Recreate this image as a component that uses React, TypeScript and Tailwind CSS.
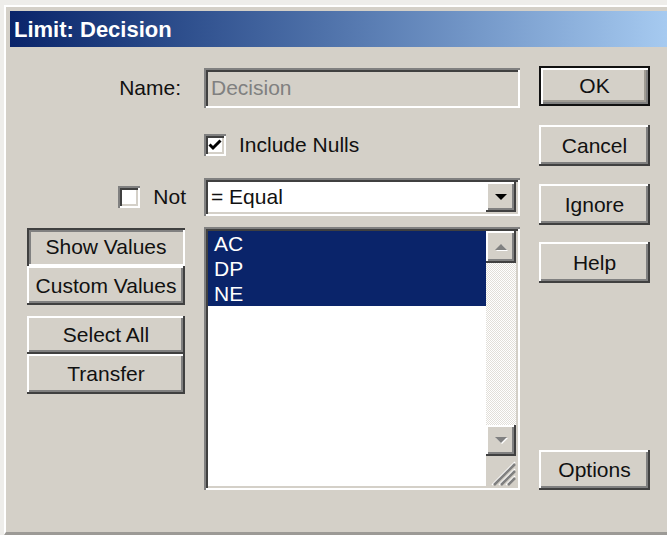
const raised =
  "shadow-[inset_-2px_-2px_0_#404040,inset_2px_2px_0_#ffffff,inset_-4px_-4px_0_#808080]";
const pressed =
  "shadow-[inset_2px_2px_0_#404040,inset_-2px_-2px_0_#ffffff,inset_4px_4px_0_#808080]";
const defaultBtn =
  "shadow-[inset_0_0_0_2px_#111111,inset_4px_4px_0_#ffffff,inset_-4px_-4px_0_#808080,inset_-6px_-6px_0_#a09c94]";
const sunken =
  "shadow-[inset_2px_2px_0_#808080,inset_-2px_-2px_0_#ffffff,inset_4px_4px_0_#404040,inset_-4px_-4px_0_#d4d0c8]";

function Button({
  label,
  className = "",
  look = raised,
}: {
  label: string;
  className?: string;
  look?: string;
}) {
  return (
    <div
      className={`flex items-center justify-center bg-[#d4d0c8] text-[21px] text-[#111] ${look} ${className}`}
    >
      {label}
    </div>
  );
}

function CheckBox({ checked }: { checked?: boolean }) {
  return (
    <div className={`flex h-[22px] w-[22px] items-center justify-center bg-white ${sunken}`}>
      {checked && (
        <svg width="14" height="12" viewBox="0 0 14 12">
          <path d="M1.5 5.5 L5 9 L12.5 1.5" fill="none" stroke="#000" strokeWidth="3" />
        </svg>
      )}
    </div>
  );
}

function Arrow({ up, dim }: { up?: boolean; dim?: boolean }) {
  const pts = up ? "1,7 7,1 13,7" : "1,1 13,1 7,7";
  return (
    <svg width="15" height="9" viewBox="0 0 15 9">
      {dim && <polygon points={pts} fill="#fff" transform="translate(1 1)" />}
      <polygon points={pts} fill={dim ? "#808080" : "#000"} />
    </svg>
  );
}

function SizeGrip() {
  return (
    <svg width="30" height="30" viewBox="0 0 30 30">
      {[0, 7, 14].map((o) => (
        <g key={o}>
          <line x1={29} y1={6 + o} x2={6 + o} y2={29} stroke="#ffffff" strokeWidth="1.5" />
          <line x1={29} y1={8 + o} x2={8 + o} y2={29} stroke="#808080" strokeWidth="2.5" />
        </g>
      ))}
    </svg>
  );
}

export default function App() {
  const items = ["AC", "DP", "NE"];
  return (
    <div className="h-[535px] w-[667px] overflow-hidden bg-[#eeedea] pl-[4px] pt-[5px] font-['Liberation_Sans',sans-serif]">
      <div className="flex h-[530px] flex-col border-b-[3px] border-l-2 border-t-2 border-b-[#9c9a96] border-l-white border-t-white bg-[#d4d0c8] pl-[4px] pt-[4px]">
        {/* caption */}
        <div className="flex h-[36px] items-center bg-gradient-to-r from-[#0a246a] to-[#a6caf0] pl-[4px] text-[22px] font-bold text-white">
          Limit: Decision
        </div>

        <div className="flex flex-1 pl-[17px] text-[21px] text-[#111]">
          {/* labels and list mode buttons */}
          <div className="flex w-[158px] flex-col">
            <div className="mt-[21px] flex h-[40px] items-center justify-end pr-[4px]">Name:</div>
            <div className="mr-[-1px] mt-[70px] flex h-[38px] items-center justify-end gap-[13px]">
              <CheckBox />
              <span>Not</span>
            </div>
            <Button label="Show Values" look={pressed} className="mt-[12px] h-[38px]" />
            <Button label="Custom Values" className="h-[39px]" />
            <Button label="Select All" className="mt-[11px] h-[38px]" />
            <Button label="Transfer" className="h-[40px]" />
          </div>

          {/* fields */}
          <div className="ml-[19px] flex w-[316px] flex-col">
            <div className={`mt-[21px] flex h-[40px] items-center bg-[#d4d0c8] pl-[7px] text-[#808080] ${sunken}`}>
              Decision
            </div>
            <div className="mt-[26px] flex h-[22px] items-center gap-[13px]">
              <CheckBox checked />
              <span>Include Nulls</span>
            </div>
            <div className={`mt-[22px] flex h-[38px] bg-white p-[4px] ${sunken}`}>
              <div className="flex flex-1 items-center pl-[3px]">= Equal</div>
              <div className={`flex w-[30px] items-center justify-center bg-[#d4d0c8] ${raised}`}>
                <Arrow />
              </div>
            </div>
            <div className={`mt-[11px] flex h-[263px] bg-white p-[4px] ${sunken}`}>
              <div className="flex flex-1 flex-col">
                {items.map((it) => (
                  <div key={it} className="flex h-[25px] items-center bg-[#0a246a] pl-[6px] text-white">
                    {it}
                  </div>
                ))}
              </div>
              <div className="flex w-[30px] flex-col">
                <div className={`flex h-[32px] items-center justify-center bg-[#d4d0c8] ${raised}`}>
                  <Arrow up dim />
                </div>
                <div className="flex-1 bg-[repeating-conic-gradient(#e2dfd9_0%_25%,#ffffff_0%_50%)] bg-[length:2px_2px]" />
                <div className={`flex h-[31px] items-center justify-center bg-[#d4d0c8] ${raised}`}>
                  <Arrow dim />
                </div>
                <div className="h-[30px] bg-[#d4d0c8]">
                  <SizeGrip />
                </div>
              </div>
            </div>
          </div>

          {/* dialog buttons */}
          <div className="ml-[19px] flex w-[111px] flex-col">
            <Button label="OK" look={defaultBtn} className="mt-[19px] h-[40px]" />
            <Button label="Cancel" className="mt-[19px] h-[41px]" />
            <Button label="Ignore" className="mt-[18px] h-[41px]" />
            <Button label="Help" className="mt-[17px] h-[41px]" />
            <Button label="Options" className="mt-[167px] h-[40px]" />
          </div>
        </div>
      </div>
    </div>
  );
}
